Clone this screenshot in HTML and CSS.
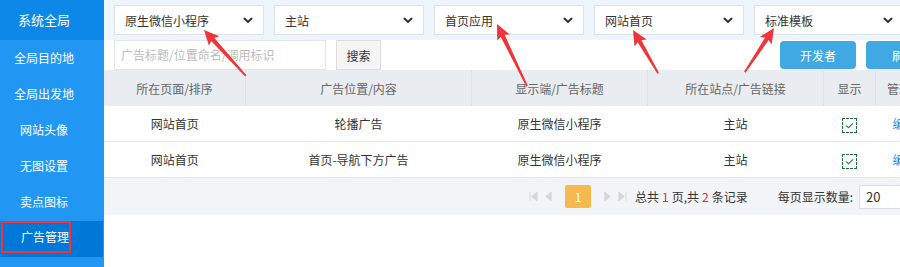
FILE: index.html
```html
<!DOCTYPE html>
<html lang="zh-CN">
  <head>
    <meta charset="UTF-8">
    <title>广告管理</title>
    <link rel="stylesheet" href="styles.css">
  </head>
  <body>
    <div class="layout">
      <div class="sidebar">
        <div class="side-head">系统全局</div>
        <div class="side-item">全局目的地</div>
        <div class="side-item">全局出发地</div>
        <div class="side-item">网站头像</div>
        <div class="side-item">无图设置</div>
        <div class="side-item">卖点图标</div>
        <div class="side-item active"><span class="mark">广告管理</span></div>
      </div>
      <div class="main">
        <div class="filters">
          <div class="select">原生微信小程序<svg class="chev" viewBox="0 0 10 6"><path d="M1 1l4 4 4-4" /></svg></div>
          <div class="select">主站<svg class="chev" viewBox="0 0 10 6"><path d="M1 1l4 4 4-4" /></svg></div>
          <div class="select">首页应用<svg class="chev" viewBox="0 0 10 6"><path d="M1 1l4 4 4-4" /></svg></div>
          <div class="select">网站首页<svg class="chev" viewBox="0 0 10 6"><path d="M1 1l4 4 4-4" /></svg></div>
          <div class="select">标准模板<svg class="chev" viewBox="0 0 10 6"><path d="M1 1l4 4 4-4" /></svg></div>
        </div>
        <div class="toolbar">
          <div class="search-input">广告标题/位置命名/调用标识</div>
          <button class="btn-search">搜索</button>
          <div class="spacer"></div>
          <button class="btn-blue">开发者</button>
          <button class="btn-blue">刷新</button>
        </div>
        <table class="grid">
          <thead>
            <tr>
              <th class="c1">所在页面/排序</th>
              <th class="c2">广告位置/内容</th>
              <th class="c3">显示端/广告标题</th>
              <th class="c4">所在站点/广告链接</th>
              <th class="c5">显示</th>
              <th class="c6">管理</th>
            </tr>
          </thead>
          <tbody>
            <tr>
              <td>网站首页</td>
              <td>轮播广告</td>
              <td>原生微信小程序</td>
              <td>主站</td>
              <td><span class="check"><svg viewBox="0 0 10 8"><path d="M1 4l3 2.5 5-5" /></svg></span></td>
              <td class="c6"><a class="link">编辑</a></td>
            </tr>
            <tr>
              <td>网站首页</td>
              <td>首页-导航下方广告</td>
              <td>原生微信小程序</td>
              <td>主站</td>
              <td><span class="check"><svg viewBox="0 0 10 8"><path d="M1 4l3 2.5 5-5" /></svg></span></td>
              <td class="c6"><a class="link">编辑</a></td>
            </tr>
          </tbody>
        </table>
        <div class="pager">
          <div class="pager-nav">
            <svg class="pg" viewBox="0 0 10 12"><path d="M1 1v10M9 1L3 6l6 5z" /></svg>
            <svg class="pg" viewBox="0 0 10 12"><path d="M8 1L2 6l6 5z" /></svg>
            <span class="page-num">1</span>
            <svg class="pg" viewBox="0 0 10 12"><path d="M2 1l6 5-6 5z" /></svg>
            <svg class="pg" viewBox="0 0 10 12"><path d="M1 1l6 5-6 5zM9 1v10" /></svg>
          </div>
          <div class="pager-info">总共<em>1</em>页,共<em>2</em>条记录</div>
          <div class="pager-size">每页显示数量:<span class="size-box">20</span></div>
        </div>
      </div>
    </div>
    <!-- annotation arrows -->
    <svg class="arrows" viewBox="0 0 900 267">
      <g transform="translate(204 30) rotate(47.6)"><polygon points="0,0 15,-7 13,-2.2 62,-0.9 62,0.9 13,2.2 15,7" /></g>
      <g transform="translate(497 24) rotate(64.2)"><polygon points="0,0 15,-7 13,-2.2 69,-0.9 69,0.9 13,2.2 15,7" /></g>
      <g transform="translate(633 30) rotate(59.8)"><polygon points="0,0 15,-7 13,-2.2 50,-0.9 50,0.9 13,2.2 15,7" /></g>
      <g transform="translate(774 28) rotate(123.4)"><polygon points="0,0 15,-7 13,-2.2 53,-0.9 53,0.9 13,2.2 15,7" /></g>
    </svg>
  </body>
</html>
```
FILE: styles.css
```css
body {
  margin: 0;
  width: 900px;
  height: 267px;
  overflow: hidden;
  font-family: "Noto Sans CJK SC", "Noto Sans", sans-serif;
  font-size: 12px;
  color: #333;
  background-color: #fff;
}

.layout {
  display: flex;
  height: 267px;
}

.sidebar {
  width: 104px;
  flex-shrink: 0;
  background-color: #2196f3;
  color: #fff;
}

.side-head {
  height: 40px;
  line-height: 40px;
  padding-right: 16px;
  text-align: center;
  font-size: 13px;
  background-color: #0d88e8;
}

.side-item {
  height: 36px;
  line-height: 36px;
  padding-right: 16px;
  text-align: center;
}

.side-item.active {
  margin-top: 1px;
  margin-right: 1px;
  background-color: #0078d8;
  padding-right: 0;
  text-align: left;
}

.mark {
  display: inline-block;
  box-sizing: border-box;
  width: 70px;
  height: 32px;
  line-height: 28px;
  margin-left: 1px;
  padding-left: 18px;
  white-space: nowrap;
  border: 2px solid #f0353a;
  vertical-align: top;
}

.main {
  width: 848px;
  flex-shrink: 0;
}

.filters {
  display: flex;
  gap: 10px;
  height: 40px;
  box-sizing: border-box;
  padding: 5px 10px 0;
  background-color: #eef5fc;
}

.select {
  box-sizing: border-box;
  width: 150px;
  height: 30px;
  flex-shrink: 0;
  display: flex;
  align-items: center;
  justify-content: space-between;
  padding: 0 10px 0 10px;
  background-color: #fff;
  border: 1px solid #dde3ea;
  color: #333;
}

.chev {
  width: 10px;
  height: 6px;
  fill: none;
  stroke: #333;
  stroke-width: 2;
}

.toolbar {
  display: flex;
  gap: 10px;
  height: 30px;
  padding: 0 10px;
  align-items: flex-start;
}

.search-input {
  box-sizing: border-box;
  width: 212px;
  height: 30px;
  line-height: 28px;
  padding-left: 6px;
  border: 1px solid #e1e4e8;
  color: #bbb;
}

.btn-search {
  box-sizing: border-box;
  width: 45px;
  height: 30px;
  font: inherit;
  color: #333;
  background-color: #f5f5f5;
  border: 1px solid #ddd;
  padding: 0;
}

.spacer {
  flex: 1;
}

.btn-blue {
  width: 76px;
  height: 28px;
  margin-top: 1px;
  font: inherit;
  color: #fff;
  background-color: #41a9e1;
  border: none;
  border-radius: 4px;
  padding: 0;
}

.grid {
  width: 100%;
  border-collapse: collapse;
  table-layout: fixed;
}

.grid th {
  height: 36px;
  padding: 0;
  font-weight: normal;
  color: #666;
  background-color: #e9ecf0;
  border-left: 1px solid #dde0e6;
}

.grid th:first-child {
  border-left: none;
}

.grid td {
  height: 35px;
  padding: 0;
  text-align: center;
  border-bottom: 1px solid #e2e5ea;
}

.c1 { width: 141px; }
.c2 { width: 225px; }
.c3 { width: 175px; }
.c4 { width: 175px; }
.c5 { width: 51px; }

.grid th.c6 {
  text-align: left;
  padding-left: 11px;
  white-space: nowrap;
}

.grid td.c6 {
  text-align: left;
  padding-left: 17px;
  white-space: nowrap;
}

.link {
  color: #1e88e5;
}

.check {
  display: inline-block;
  box-sizing: border-box;
  width: 15px;
  height: 15px;
  border: 1px dashed #1f6b3a;
  vertical-align: middle;
  line-height: 0;
}

.check svg {
  width: 9px;
  height: 7px;
  margin-top: 3px;
  fill: none;
  stroke: #2c8a4e;
  stroke-width: 1.4;
}

.pager {
  display: flex;
  align-items: center;
  height: 37px;
  padding-left: 425px;
  background-color: #f3f4f8;
}

.pager-nav {
  display: flex;
  align-items: center;
  gap: 6px;
}

.pg {
  width: 9px;
  height: 11px;
  fill: #d6d6d6;
  stroke: #d6d6d6;
  stroke-width: 1;
}

.page-num {
  display: inline-block;
  width: 26px;
  height: 23px;
  line-height: 23px;
  margin: 0 6px;
  text-align: center;
  color: #fff;
  background-color: #f6b94f;
  border-radius: 2px;
}

.pager-info {
  margin-left: 8px;
}

.pager-info em {
  font-style: normal;
  color: #e8262a;
  padding: 0 3px;
}

.pager-size {
  margin-left: 30px;
  display: flex;
  align-items: center;
}

.size-box {
  box-sizing: border-box;
  width: 60px;
  height: 24px;
  line-height: 22px;
  margin-left: 6px;
  padding-left: 6px;
  font-size: 13px;
  background-color: #fff;
  border: 1px solid #ddd;
}

.arrows {
  position: absolute;
  left: 0;
  top: 0;
  width: 900px;
  height: 267px;
  pointer-events: none;
  fill: #f0353a;
}
```
